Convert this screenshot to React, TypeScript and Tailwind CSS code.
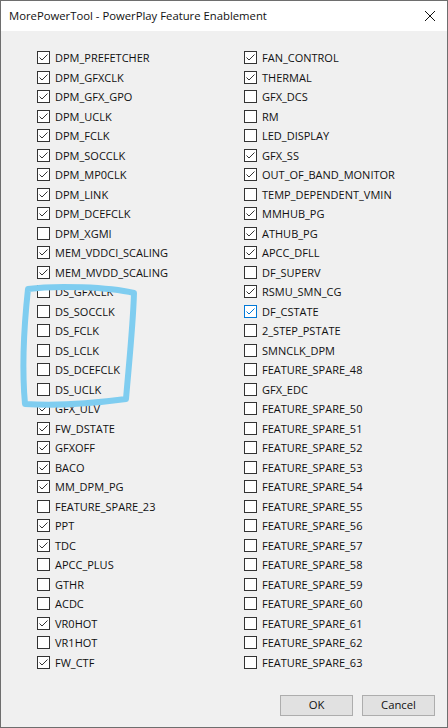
import React from "react";

type Feature = { name: string; on: boolean; hot?: boolean };

const left: Feature[] = [
  { name: "DPM_PREFETCHER", on: true },
  { name: "DPM_GFXCLK", on: true },
  { name: "DPM_GFX_GPO", on: true },
  { name: "DPM_UCLK", on: true },
  { name: "DPM_FCLK", on: true },
  { name: "DPM_SOCCLK", on: true },
  { name: "DPM_MP0CLK", on: true },
  { name: "DPM_LINK", on: true },
  { name: "DPM_DCEFCLK", on: true },
  { name: "DPM_XGMI", on: false },
  { name: "MEM_VDDCI_SCALING", on: true },
  { name: "MEM_MVDD_SCALING", on: true },
  { name: "DS_GFXCLK", on: false },
  { name: "DS_SOCCLK", on: false },
  { name: "DS_FCLK", on: false },
  { name: "DS_LCLK", on: false },
  { name: "DS_DCEFCLK", on: false },
  { name: "DS_UCLK", on: false },
  { name: "GFX_ULV", on: true },
  { name: "FW_DSTATE", on: true },
  { name: "GFXOFF", on: true },
  { name: "BACO", on: true },
  { name: "MM_DPM_PG", on: true },
  { name: "FEATURE_SPARE_23", on: false },
  { name: "PPT", on: true },
  { name: "TDC", on: true },
  { name: "APCC_PLUS", on: false },
  { name: "GTHR", on: false },
  { name: "ACDC", on: false },
  { name: "VR0HOT", on: true },
  { name: "VR1HOT", on: false },
  { name: "FW_CTF", on: true },
];

const right: Feature[] = [
  { name: "FAN_CONTROL", on: true },
  { name: "THERMAL", on: true },
  { name: "GFX_DCS", on: false },
  { name: "RM", on: false },
  { name: "LED_DISPLAY", on: false },
  { name: "GFX_SS", on: true },
  { name: "OUT_OF_BAND_MONITOR", on: true },
  { name: "TEMP_DEPENDENT_VMIN", on: false },
  { name: "MMHUB_PG", on: true },
  { name: "ATHUB_PG", on: true },
  { name: "APCC_DFLL", on: true },
  { name: "DF_SUPERV", on: false },
  { name: "RSMU_SMN_CG", on: true },
  { name: "DF_CSTATE", on: true, hot: true },
  { name: "2_STEP_PSTATE", on: false },
  { name: "SMNCLK_DPM", on: false },
  { name: "FEATURE_SPARE_48", on: false },
  { name: "GFX_EDC", on: false },
  ...Array.from({ length: 14 }, (_, i) => ({
    name: `FEATURE_SPARE_${50 + i}`,
    on: false,
  })),
];

export default function App() {
  return (
    <div
      className="relative w-[448px] h-[728px] overflow-hidden bg-[#f0f0f0] border border-[#6e6e6e] text-[#000]"
      style={{ fontFamily: '"Open Sans", "Noto Sans", sans-serif' }}
    >
      {/* ---------- Title bar ---------- */}
      <div className="h-[30px] bg-white flex items-center justify-between pl-[8px] pr-[10px]">
        <span className="text-[11.3px] text-[#111]">
          MorePowerTool - PowerPlay Feature Enablement
        </span>
        <svg width="12" height="12" viewBox="0 0 12 12" className="mr-[1px]">
          <path d="M1 1 L11 11 M11 1 L1 11" stroke="#111" strokeWidth="1" />
        </svg>
      </div>

      {/* ---------- Feature grid ---------- */}
      <div className="grid grid-cols-[207px_1fr] pl-[36px] pt-[17px]">
        <div className="flex flex-col">
          {left.map((f) => (
            <Check key={f.name} f={f} />
          ))}
        </div>
        <div className="flex flex-col">
          {right.map((f) => (
            <Check key={f.name} f={f} />
          ))}
        </div>
      </div>

      {/* ---------- Buttons ---------- */}
      <div className="flex justify-end gap-[9px] pr-[12px] pt-[23px]">
        <Btn label="OK" />
        <Btn label="Cancel" />
      </div>

      {/* ---------- Hand-drawn annotation ---------- */}
      <svg
        className="absolute left-0 top-0 pointer-events-none"
        width="448"
        height="728"
        viewBox="0 0 448 728"
      >
        <path
          d="M27 288 C55 284, 108 286, 133 292 C132 325, 128 362, 125 398 C95 402, 55 405, 24 403 C21 370, 23 325, 27 288 Z"
          fill="none"
          stroke="#7fcdf0"
          strokeWidth="6"
          strokeLinejoin="round"
        />
      </svg>
    </div>
  );
}

/* ---------- Child Components ---------- */
function Check({ f }: { f: Feature }) {
  const color = f.hot ? "#0078d7" : "#333";
  return (
    <div className="h-[19.5px] flex items-center gap-[5px]">
      <div
        className={`w-[13px] h-[13px] shrink-0 bg-white border ${
          f.hot ? "border-[#0078d7]" : "border-[#333]"
        }`}
      >
        {f.on && (
          <svg width="11" height="11" viewBox="0 0 11 11">
            <path
              d="M1.5 5.5 L4 8 L9.5 2.5"
              fill="none"
              stroke={color}
              strokeWidth="1"
            />
          </svg>
        )}
      </div>
      <span className="text-[11px] leading-none text-[#111]">{f.name}</span>
    </div>
  );
}

function Btn({ label }: { label: string }) {
  return (
    <div className="w-[73px] h-[21px] bg-[#e1e1e1] border border-[#adadad] flex items-center justify-center text-[11.3px] text-[#111]">
      {label}
    </div>
  );
}
